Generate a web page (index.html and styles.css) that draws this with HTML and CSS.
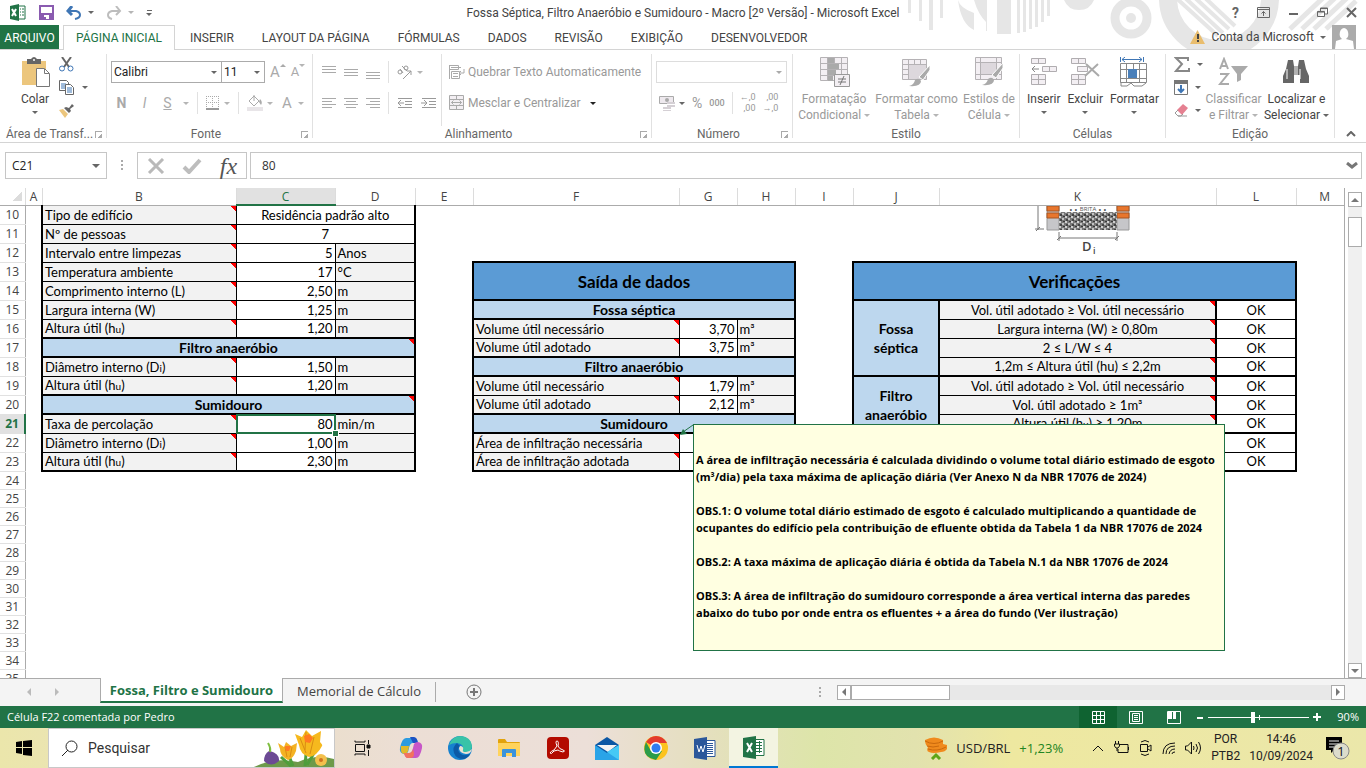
FILE: index.html
```html
<!DOCTYPE html>
<html lang="pt-BR">
<head>
<meta charset="utf-8">
<title>Fossa Séptica, Filtro Anaeróbio e Sumidouro - Microsoft Excel</title>
<link rel="stylesheet" href="styles.css">
</head>
<body>
<header class="top">
  <svg class="pattern" width="462" height="49" viewBox="904 0 462 49" aria-hidden="true">
    <g fill="#e6e6e6">
      <path d="M908 0h3v13h-3zM919 0h3v21h-3zM929 0h4v30h-4zM940 0h3v18h-3zM958 0q2 8 16 13v17q-13-6-16-30zM974 0h13v31h-1V22q-8-8-12-22zM997 0h14v34h-14zM1017 0h3v33h-3zM1023 0h3v32h-3zM1029 0h3v29h-3zM1035 0h3v27h-3zM1041 0h3v22h-3zM1047 0h3v16h-3z"/>
      <path d="M1064 0h30q-4 10-15 10t-15-10z"/>
      <circle cx="1131" cy="18" r="5"/>
    </g>
    <circle cx="1131" cy="18" r="16" fill="none" stroke="#e6e6e6" stroke-width="9"/>
    <circle cx="1219" cy="-2" r="51" fill="none" stroke="#e6e6e6" stroke-width="18"/>
    <path d="M1174-4l44 40M1183-4l40 37M1193-4l36 33M1203-4l32 30" stroke="#e6e6e6" stroke-width="4"/>
    <path d="M1290 29l34-32M1302 29l34-32M1314 29l34-32M1326 29l30-28" stroke="#e6e6e6" stroke-width="5"/>
  </svg>
  <div class="titlebar">
    <div class="quick">
      <svg width="18" height="18" viewBox="0 0 18 18"><path d="M9 2h7v13H9z" fill="#fff" stroke="#217346"/><path d="M11 5h1M13 5h2M11 8h1M13 8h2M11 11h1M13 11h2" stroke="#217346"/><path d="M1 2l9-2v17l-9-2z" fill="#217346"/><path d="M3 5l4 7M7 5l-4 7" stroke="#fff" stroke-width="2"/></svg>
      <button aria-label="Salvar"><svg width="15" height="15" viewBox="0 0 15 15"><path d="M1 1h13v13H1z" fill="#fff" stroke="#8a5bb0" stroke-width="2"/><path d="M1 8h13v6H1z" fill="#8a5bb0"/><path d="M5 10h5v4H7v-2H5z" fill="#fff"/></svg></button>
      <button class="undo" aria-label="Desfazer"><svg width="16" height="14" viewBox="0 0 16 14"><path d="M2 5h8q4 1 4 4t-5 4" fill="none" stroke="#3f76b5" stroke-width="2"/><path d="M6 0L2 5l4 4" fill="none" stroke="#3f76b5" stroke-width="3"/></svg><i class="caret"></i></button>
      <button class="undo" aria-label="Refazer"><svg width="16" height="14" viewBox="0 0 16 14"><path d="M14 5H6Q2 6 2 9t4 4" fill="none" stroke="#bdbdbd" stroke-width="2"/><path d="M10 0l4 5-4 4" fill="none" stroke="#bdbdbd" stroke-width="2"/></svg><i class="caret pale"></i></button>
      <button class="more" aria-label="Personalizar"><b></b><i class="caret"></i></button>
    </div>
    <h1>Fossa Séptica, Filtro Anaeróbio e Sumidouro - Macro [2º Versão] - Microsoft Excel</h1>
    <div class="winbtns">
      <button class="help" aria-label="Ajuda">?</button>
      <button aria-label="Opções da faixa"><svg width="13" height="11" viewBox="0 0 13 11" fill="none" stroke="#666"><path d="M.5.5h12v10H.5zM.5 2.5h12M6.500 9V4.500M4.500 6.500l2-2 2 2"/></svg></button>
      <button aria-label="Minimizar"><svg width="11" height="11" viewBox="0 0 11 11"><path d="M1 6h9v2H1z" fill="#666"/></svg></button>
      <button aria-label="Restaurar"><svg width="11" height="11" viewBox="0 0 11 11" fill="none" stroke="#666"><path d="M.5 4.500h7v5h-7zM.5 5h7M3.500 4V1h7v6H8M3.500 1.500h7"/></svg></button>
      <button aria-label="Fechar"><svg width="11" height="11" viewBox="0 0 11 11"><path d="M1 1l9 9M10 1l-9 9" stroke="#666" stroke-width="2"/></svg></button>
    </div>
  </div>
  <nav class="tabs">
    <a href="#" class="file">ARQUIVO</a>
    <a href="#" class="on">PÁGINA INICIAL</a>
    <a href="#">INSERIR</a>
    <a href="#">LAYOUT DA PÁGINA</a>
    <a href="#">FÓRMULAS</a>
    <a href="#">DADOS</a>
    <a href="#">REVISÃO</a>
    <a href="#">EXIBIÇÃO</a>
    <a href="#">DESENVOLVEDOR</a>
    <button class="account"><svg width="15" height="14" viewBox="0 0 15 14"><path d="M7.500 0l7.500 14H0z" fill="#e9bd6d"/><path d="M7 4h2v5H7zM7 10h2v2H7z" fill="#444"/></svg>Conta da Microsoft<i class="caret"></i><svg width="24" height="24" viewBox="0 0 24 24"><path d="M0 0h24v24H0z" fill="#ababab"/><path d="M12 3a5 6 0 0 1 2 11l7 2 1 8H3l1-8 6-2a5 6 0 0 1 2-11z" fill="#fff"/></svg></button>
  </nav>
</header>

<section class="ribbon">
  <div class="group">
    <div class="body clip">
      <button class="big"><svg width="30" height="30" viewBox="0 0 30 30"><path d="M2 4h24v24H2z" fill="#ecc67d"/><path d="M7 2h4q3-4 6 0h4v5H7z" fill="#666"/><circle cx="14" cy="3" r="1" fill="#fff"/><path d="M16.500 11.500h8l5 5v13h-13z" fill="#fff" stroke="#777"/><path d="M24.500 12v4.500H29" fill="none" stroke="#777"/></svg><span>Colar</span><i class="caret"></i></button>
      <div class="stack">
        <button aria-label="Recortar"><svg width="15" height="15" viewBox="0 0 15 15" fill="none"><path d="M3 0l7 10M12 0L5 10" stroke="#666" stroke-width="2"/><circle cx="3" cy="11.500" r="2.500" stroke="#3f76b5"/><circle cx="11.500" cy="11.500" r="2.500" stroke="#3f76b5"/></svg></button>
        <button aria-label="Copiar"><svg width="16" height="15" viewBox="0 0 16 15"><path d="M.5.5h7l2 2v8h-9z" fill="#fff" stroke="#666"/><path d="M2 4h5M2 6h5M2 8h5" stroke="#3f76b5"/><path d="M6.500 4.500h5l3 3v7h-8z" fill="#fff" stroke="#666"/><path d="M8 8h5M8 10h5M8 12h5" stroke="#3f76b5"/></svg><i class="caret"></i></button>
        <button aria-label="Pincel de formatação"><svg width="16" height="14" viewBox="0 0 16 14"><path d="M0 6l4-1 5 5-3 4z" fill="#ecc67d"/><path d="M5 4l5 5 2-2-1-2 4-3-2-2-3 4-3-1z" fill="#666"/></svg></button>
      </div>
    </div>
    <footer><span>Área de Transf...</span><i class="launch"></i></footer>
  </div>

  <div class="group off">
    <div class="body rows pad4">
      <div class="row">
        <label class="combo font"><select aria-label="Fonte"><option>Calibri</option></select></label><label class="combo size"><select aria-label="Tamanho"><option>11</option></select></label>
        <button class="grow" aria-label="Aumentar fonte">A<i class="up"></i></button>
        <button class="shrink" aria-label="Diminuir fonte">A<i class="caret pale"></i></button>
      </div>
      <div class="row fmt">
        <button class="ltr"><b>N</b></button><button class="ltr"><em>I</em></button><button class="ltr"><u>S</u></button><button aria-label="Sublinhado"><i class="caret pale"></i></button>
        <i class="bar"></i>
        <button aria-label="Bordas"><svg width="14" height="14" viewBox="0 0 14 14"><path d="M.5 0v13M6.500 0v13M12.500 0v13M0 .5h13M0 6.500h13" stroke="#aaa" stroke-dasharray="1 1"/><path d="M0 13h13" stroke="#999" stroke-width="2"/></svg><i class="caret pale"></i></button>
        <i class="bar"></i>
        <button aria-label="Cor de preenchimento"><svg width="16" height="16" viewBox="0 0 16 16"><path d="M2 6l5-5 5 5-5 5zM7 6V0" fill="none" stroke="#aaa"/><path d="M13 4q3 3 1 6l-2-3z" fill="#aaa"/><path d="M0 12h16v4H0z" fill="#e8e5e8"/></svg><i class="caret pale"></i></button>
        <button class="ltr fontcolor">A<i class="caret pale"></i></button>
      </div>
    </div>
    <footer><span>Fonte</span><i class="launch"></i></footer>
  </div>

  <div class="group off align">
    <div class="body rows">
      <div class="row">
        <button aria-label="Alinhar acima"><i class="ln t"></i></button><button aria-label="Alinhar no meio"><i class="ln"></i></button><button aria-label="Alinhar abaixo"><i class="ln d"></i></button>
        <i class="bar"></i>
        <button aria-label="Orientação"><svg width="16" height="16" viewBox="0 0 16 16"><g fill="none" stroke="#999"><circle cx="3" cy="8" r="2"/><path d="M3 5l3 4M5 2l5 5"/><circle cx="9" cy="4" r="2"/><path d="M6 15l8-8M10 7h4v4"/></g></svg><i class="caret pale"></i></button>
      </div>
      <div class="row">
        <button aria-label="Esquerda"><i class="ln l4"></i></button><button aria-label="Centro"><i class="ln l4 c"></i></button><button aria-label="Direita"><i class="ln l4 r"></i></button>
        <i class="bar"></i>
        <button aria-label="Diminuir recuo"><svg width="16" height="12" viewBox="0 0 16 12"><path d="M1 1.500h14M8 4.500h7M8 7.500h7M1 10.500h14M1 6h6M4 3L1 6l3 3" fill="none" stroke="#999"/></svg></button>
        <button aria-label="Aumentar recuo"><svg width="16" height="12" viewBox="0 0 16 12"><path d="M1 1.500h14M8 4.500h7M8 7.500h7M1 10.500h14M0 6h6M3 3l3 3-3 3" fill="none" stroke="#999"/></svg></button>
      </div>
    </div>
    <div class="body rows wrapcol">
      <button class="row txt"><svg width="16" height="16" viewBox="0 0 16 16" fill="none" stroke="#aaa"><path d="M.5 1v14M.5 1.500h9v4h-9zM2 3.500h10M2.500 7.500h8v7h-8zM4 9.500h5M4 12.500h5M15 5v4h-4M12 7l-2 2 2 2"/></svg><span>Quebrar Texto Automaticamente</span></button>
      <button class="row txt"><svg width="16" height="16" viewBox="0 0 16 16" fill="#f3eff3" stroke="#aaa"><path d="M.5.5h14v14H.5zM.5 4.500h14M.5 10.500h14M7.500.5v4M7.500 10.500v4M2.500 7.500h10M4.500 5.500l-2 2 2 2M10.500 5.500l2 2-2 2"/></svg><span>Mesclar e Centralizar</span><i class="caret dark"></i></button>
    </div>
    <footer><span>Alinhamento</span><i class="launch"></i></footer>
  </div>

  <div class="group off">
    <div class="body rows pad4">
      <label class="combo num"><select aria-label="Formato de número"><option></option></select></label>
      <div class="row nums">
        <button aria-label="Moeda"><svg width="16" height="16" viewBox="0 0 16 16"><path d="M.5 1.500h14v7H.5z" fill="#eee9ee" stroke="#aaa"/><circle cx="8" cy="5" r="2" fill="#aaa"/><path d="M8 7h8v2H8zM8 10h8v2H8zM4 12h8v2H4zM4 15h8v1H4z" fill="#d5d0d5"/></svg><i class="caret"></i></button>
        <button class="pct">%</button><button class="mil">000</button><i class="bar"></i>
        <button class="dec"><span>←,0</span><span>,00</span></button><button class="dec"><span>,00</span><span>→,0</span></button>
      </div>
    </div>
    <footer><span>Número</span><i class="launch"></i></footer>
  </div>

  <div class="group off">
    <div class="body bigs">
      <button class="big"><svg width="31" height="30" viewBox="0 0 31 30"><path d="M1.500.5h27v23h-27zM8.500.5v23M15.500.5v23M22.500.5v23M1.500 6.500h27M1.500 12.500h27M1.500 18.500h27" fill="#f3eff3" stroke="#b5b2b5"/><path d="M9 1h6v5H9zM9 7h11v5H9zM9 13h8v5H9zM9 19h5v5H9z" fill="#aaa"/><path d="M15.500 17.500h15v12h-15z" fill="#f3eff3" stroke="#999"/><path d="M19 22h8M19 25h8M25 19l-4 9" stroke="#777"/></svg><span>Formatação<br>Condicional <i class="caret pale"></i></span></button>
      <button class="big"><svg width="31" height="30" viewBox="0 0 31 30"><path d="M1.500 2.500h24v20h-24zM7.500 2.500v20M13.500 2.500v20M19.500 2.500v20M1.500 7.500h24M1.500 12.500h24M1.500 17.500h24" fill="#f3eff3" stroke="#b5b2b5"/><path d="M8 8h17v14H8z" fill="#ddd8dd"/><path d="M29 8L18 20l4 3 7-10z" fill="#aaa" stroke="#fff"/><path d="M8 29q5-1 6-6 4-3 6 1 0 6-12 5z" fill="#aaa"/></svg><span>Formatar como<br>Tabela <i class="caret pale"></i></span></button>
      <button class="big"><svg width="31" height="30" viewBox="0 0 31 30"><path d="M2.500.5h26v22h-26zM7.500.5v22M23.500.5v22M2.500 5.500h26M2.500 17.500h26" fill="#f3eff3" stroke="#b5b2b5"/><path d="M8 6h15v11H8z" fill="#ddd8dd"/><path d="M30 6L19 18l4 3 7-10z" fill="#aaa" stroke="#fff"/><path d="M9 28q5-1 6-6 4-3 6 1 0 6-12 5z" fill="#aaa"/></svg><span>Estilos de<br>Célula <i class="caret pale"></i></span></button>
    </div>
    <footer><span>Estilo</span></footer>
  </div>

  <div class="group">
    <div class="body bigs">
      <button class="big"><svg width="28" height="30" viewBox="0 0 28 30"><path d="M1.500 1.500h14v5h-14zM8.500 1.500v5M12.500 9.500h14v5h-14zM19.500 9.500v5M1.500 17.500h14v10h-14zM1.500 22.500h14M8.500 17.500v10" fill="#f3eff3" stroke="#b0adb0"/><path d="M9 12H3M5 9l-3 3 3 3" fill="none" stroke="#888"/></svg><span>Inserir</span><i class="caret"></i></button>
      <button class="big"><svg width="30" height="30" viewBox="0 0 30 30"><path d="M1.500 1.500h14v5h-14zM8.500 1.500v5M7.500 9.500h10v5h-10zM1.500 17.500h14v10h-14zM1.500 22.500h14M8.500 17.500v10" fill="#f3eff3" stroke="#b0adb0"/><path d="M16 7l13 12M28 7L15 19" stroke="#aaa" stroke-width="2"/></svg><span>Excluir</span><i class="caret"></i></button>
      <button class="big"><svg width="30" height="30" viewBox="0 0 30 30"><path d="M1.500 6.500h26v19h-26zM7.500 6.500v19M20.500 6.500v19M1.500 12.500h26M1.500 21.500h26M14.500 6.500v6" fill="#fff" stroke="#888"/><path d="M9 12h9v9H9z" fill="#4a80ba"/><path d="M2 25v4h6l4-3 3 3h8l4-3" fill="none" stroke="#888"/><path d="M1.500 0v5M24.500 0v5M3 2.500h20M6 0L3 2.500 6 5M20 0l3 2.500L20 5" fill="none" stroke="#3f76b5"/></svg><span>Formatar</span><i class="caret"></i></button>
    </div>
    <footer><span>Células</span></footer>
  </div>

  <div class="group">
    <div class="body edit">
      <div class="stack">
        <button aria-label="Soma"><svg width="16" height="15" viewBox="0 0 16 15"><path d="M14 4V1H2l6 6-6 7h13v-3" fill="none" stroke="#888" stroke-width="2"/></svg><i class="caret"></i></button>
        <button aria-label="Preencher"><svg width="14" height="15" viewBox="0 0 14 15"><path d="M.5.5h13v14H.5z" fill="#fff" stroke="#777"/><path d="M0 0h14v4H0z" fill="#777"/><path d="M7 5v7M4 9l3 3 3-3" fill="none" stroke="#3f76b5" stroke-width="2"/></svg><i class="caret"></i></button>
        <button aria-label="Limpar"><svg width="14" height="13" viewBox="0 0 14 13"><path d="M3 6l6-6 5 4-6 7z" fill="#e58091"/><path d="M4 6L1 9l3 3h3l2-2M4 12h9" fill="none" stroke="#999"/></svg><i class="caret"></i></button>
      </div>
      <button class="big dis"><svg width="30" height="30" viewBox="0 0 30 30"><g fill="none" stroke="#aaa" stroke-width="2"><path d="M2 12L6 2l4 10M3 9h6M2 17h8L2 27h9"/></g><path d="M13 9h17l-7 8v6l-4 2v-8z" fill="#aaa"/></svg><span>Classificar<br>e Filtrar <i class="caret pale"></i></span></button>
      <button class="big"><svg width="26" height="30" viewBox="0 0 26 30"><path d="M5 3h5l1 6h4l1-6h5l2 9 3 7v7h-9v-8h-6v8H0v-7l3-7z" fill="#666"/><path d="M4 12v10M12 9v9M14 9v9M17 12v10" stroke="#fff"/></svg><span>Localizar e<br>Selecionar <i class="caret"></i></span></button>
    </div>
    <footer><span>Edição</span></footer>
  </div>
  <button class="collapse" aria-label="Recolher"><svg width="10" height="6" viewBox="0 0 10 6"><path d="M1 5l4-4 4 4" fill="none" stroke="#666" stroke-width="2"/></svg></button>
</section>

<section class="fbar">
  <label class="combo name"><input aria-label="Caixa de nome" value="C21"></label>
  <i class="dots"></i>
  <div class="fx">
    <button aria-label="Cancelar"><svg width="18" height="16" viewBox="0 0 18 16"><path d="M2 1l14 14M16 1L2 15" stroke="#b9b9b9" stroke-width="3"/></svg></button>
    <button aria-label="Inserir"><svg width="20" height="16" viewBox="0 0 20 16"><path d="M2 9l5 5L18 2" fill="none" stroke="#bdbdbd" stroke-width="4"/></svg></button>
    <button class="fxb">fx</button>
  </div>
  <div class="formula"><input aria-label="Fórmula" value="80"><svg width="12" height="8" viewBox="0 0 12 8"><path d="M1 1l5 4 5-4" fill="none" stroke="#777" stroke-width="3"/></svg></div>
</section>

<main class="sheet">
  <div class="view">
    <table>
      <colgroup><col class="w25"><col class="w17"><col class="w194"><col class="w99"><col class="w80"><col class="w58"><col class="w206"><col class="w58"><col class="w58"><col class="w58"><col class="w86"><col class="w277"><col class="w80"><col></colgroup>
      <thead><tr><th class="corner"></th><th>A</th><th>B</th><th class="sel">C</th><th>D</th><th>E</th><th>F</th><th>G</th><th>H</th><th>I</th><th>J</th><th>K</th><th>L</th><th>M</th></tr></thead>
      <tbody>
        <tr><th>10</th><td></td><td class="lab n ml">Tipo de edifício</td><td colspan="2" class="val mid mr">Residência padrão alto</td><td></td><td></td><td></td><td></td><td></td><td></td><td></td><td></td><td></td></tr>
        <tr><th>11</th><td></td><td class="lab n ml">Nº de pessoas</td><td colspan="2" class="val mid mr">7</td><td></td><td></td><td></td><td></td><td></td><td></td><td></td><td></td><td></td></tr>
        <tr><th>12</th><td></td><td class="lab n ml">Intervalo entre limpezas</td><td class="val">5</td><td class="unit mr">Anos</td><td></td><td></td><td></td><td></td><td></td><td></td><td></td><td></td><td></td></tr>
        <tr><th>13</th><td></td><td class="lab n ml">Temperatura ambiente</td><td class="val">17</td><td class="unit mr">°C</td><td></td><td colspan="3" rowspan="2" class="head ml mr">Saída de dados</td><td></td><td colspan="3" rowspan="2" class="head ml mr">Verificações</td><td></td></tr>
        <tr><th>14</th><td></td><td class="lab n ml">Comprimento interno (L)</td><td class="val">2,50</td><td class="unit mr">m</td><td></td><td></td><td></td></tr>
        <tr><th>15</th><td></td><td class="lab n ml">Largura interna (W)</td><td class="val">1,25</td><td class="unit mr">m</td><td></td><td colspan="3" class="sub ml mr">Fossa séptica</td><td></td><td rowspan="4" class="sub ml mr">Fossa<br>séptica</td><td class="lab mid n">Vol. útil adotado ≥ Vol. útil necessário</td><td class="val mid ml mr">OK</td><td></td></tr>
        <tr><th>16</th><td></td><td class="lab n ml">Altura útil (h<small>u</small>)</td><td class="val">1,20</td><td class="unit mr">m</td><td></td><td class="lab n ml">Volume útil necessário</td><td class="val">3,70</td><td class="unit mr">m³</td><td></td><td class="lab mid n">Largura interna (W) ≥ 0,80m</td><td class="val mid ml mr">OK</td><td></td></tr>
        <tr><th>17</th><td></td><td colspan="3" class="sub n ml mr">Filtro anaeróbio</td><td></td><td class="lab n ml">Volume útil adotado</td><td class="val">3,75</td><td class="unit mr">m³</td><td></td><td class="lab mid n">2 ≤ L/W ≤ 4</td><td class="val mid ml mr">OK</td><td></td></tr>
        <tr><th>18</th><td></td><td class="lab n ml">Diâmetro interno (D<small>i</small>)</td><td class="val">1,50</td><td class="unit mr">m</td><td></td><td colspan="3" class="sub ml mr">Filtro anaeróbio</td><td></td><td class="lab mid n mb">1,2m ≤ Altura útil (hu) ≤ 2,2m</td><td class="val mid ml mr mb">OK</td><td></td></tr>
        <tr><th>19</th><td></td><td class="lab n ml">Altura útil (h<small>u</small>)</td><td class="val">1,20</td><td class="unit mr">m</td><td></td><td class="lab n ml">Volume útil necessário</td><td class="val">1,79</td><td class="unit mr">m³</td><td></td><td rowspan="3" class="sub ml mr">Filtro<br>anaeróbio</td><td class="lab mid n">Vol. útil adotado ≥ Vol. útil necessário</td><td class="val mid ml mr">OK</td><td></td></tr>
        <tr><th>20</th><td></td><td colspan="3" class="sub n ml mr">Sumidouro</td><td></td><td class="lab n ml">Volume útil adotado</td><td class="val">2,12</td><td class="unit mr">m³</td><td></td><td class="lab mid n">Vol. útil adotado ≥ 1m³</td><td class="val mid ml mr">OK</td><td></td></tr>
        <tr><th class="sel">21</th><td></td><td class="lab n ml">Taxa de percolação</td><td class="val active">80</td><td class="unit mr">min/m</td><td></td><td colspan="3" class="sub ml mr">Sumidouro</td><td></td><td class="lab mid n mb">Altura útil (h<small>u</small>) ≥ 1,20m</td><td class="val mid ml mr mb">OK</td><td></td></tr>
        <tr><th>22</th><td></td><td class="lab n ml">Diâmetro interno (D<small>i</small>)</td><td class="val">1,00</td><td class="unit mr">m</td><td></td><td class="lab n ml">Área de infiltração necessária</td><td class="val"></td><td class="unit mr"></td><td></td><td rowspan="2" class="sub ml mr"></td><td class="lab mid n"></td><td class="val mid ml mr">OK</td><td></td></tr>
        <tr><th>23</th><td></td><td class="lab n ml mb">Altura útil (h<small>u</small>)</td><td class="val mb">2,30</td><td class="unit mr mb">m</td><td></td><td class="lab n ml mb">Área de infiltração adotada</td><td class="val mb"></td><td class="unit mr mb"></td><td></td><td class="lab mid n mb"></td><td class="val mid ml mr mb">OK</td><td></td></tr>
        <tr class="s"><th>24</th><td colspan="13"></td></tr>
        <tr class="s"><th>25</th><td colspan="13"></td></tr>
        <tr class="s"><th>26</th><td colspan="13"></td></tr>
        <tr class="s"><th>27</th><td colspan="13"></td></tr>
        <tr class="s"><th>28</th><td colspan="13"></td></tr>
        <tr class="s"><th>29</th><td colspan="13"></td></tr>
        <tr class="s"><th>30</th><td colspan="13"></td></tr>
        <tr class="s"><th>31</th><td colspan="13"></td></tr>
        <tr class="s"><th>32</th><td colspan="13"></td></tr>
        <tr class="s"><th>33</th><td colspan="13"></td></tr>
        <tr class="s"><th>34</th><td colspan="13"></td></tr>
        <tr class="s"><th>35</th><td colspan="13"></td></tr>
      </tbody>
    </table>
    <svg class="figure" width="100" height="50" viewBox="0 0 100 50">
      <defs><pattern id="grav" width="6" height="5" patternUnits="userSpaceOnUse"><path d="M0 0h6v5H0z" fill="#777"/><circle cx="1" cy="1" r="1" fill="#eee"/><circle cx="4" cy="3" r="1" fill="#ddd"/><circle cx="5" cy="0" r="1" fill="#222"/><circle cx="2" cy="4" r="1" fill="#333"/></pattern></defs>
      <path d="M12 0h12v24H12zM82 0h12v24H82z" fill="#c6c6c9" stroke="#999"/>
      <path d="M12 0h12v5H12zM12 7h12v5H12zM82 0h12v5H82zM82 7h12v5H82z" fill="#e8762d" stroke="#a65522"/>
      <path d="M24 6h58v18H24z" fill="url(#grav)"/>
      <text x="53" y="5" font-size="6" font-family="Open Sans" text-anchor="middle" fill="#555">∘ ∘ BRITA ∘ ∘</text>
      <path d="M3 0v24M0 23h9M1 25l4-4M24 26v9M82 26v9M24 32h58M22 34l4-4M80 34l4-4" stroke="#777" fill="none"/>
      <text x="47" y="45" font-size="13" font-weight="600" font-family="Open Sans" fill="#444">D</text><text x="58" y="48" font-size="9" font-weight="600" font-family="Open Sans" fill="#444">i</text>
    </svg>
    <svg class="arrow" width="15" height="12" viewBox="0 0 15 12"><path d="M14 1L4 8" stroke="#217346"/><path d="M1 11l3-6 4 5z" fill="#217346"/></svg>
    <aside class="note">
      <p>A área de infiltração necessária é calculada dividindo o volume total diário estimado de esgoto<br>(m³/dia) pela taxa máxima de aplicação diária (Ver Anexo N da NBR 17076 de 2024)</p>
      <p>OBS.1: O volume total diário estimado de esgoto é calculado multiplicando a quantidade de<br>ocupantes do edifício pela contribuição de efluente obtida da Tabela 1 da NBR 17076 de 2024</p>
      <p>OBS.2: A taxa máxima de aplicação diária é obtida da Tabela N.1 da NBR 17076 de 2024</p>
      <p>OBS.3: A área de infiltração do sumidouro corresponde a área vertical interna das paredes<br>abaixo do tubo por onde entra os efluentes + a área do fundo (Ver ilustração)</p>
    </aside>
  </div>
  <div class="vscroll"><button aria-label="Subir"><i class="tri u"></i></button><i class="thumb"></i><button class="end" aria-label="Descer"><i class="tri dn"></i></button></div>
</main>

<nav class="sheets">
  <button class="nav" aria-label="Anterior"><i class="tri lf pale"></i></button><button class="nav" aria-label="Próxima"><i class="tri rt pale"></i></button>
  <a href="#" class="tab on">Fossa, Filtro e Sumidouro</a>
  <a href="#" class="tab">Memorial de Cálculo</a>
  <button class="add" aria-label="Nova planilha"><svg width="16" height="16" viewBox="0 0 16 16" fill="none" stroke="#777"><circle cx="8" cy="8" r="7"/><path d="M8 4v8M4 8h8" stroke-width="2"/></svg></button>
  <i class="dots"></i>
  <div class="hscroll"><button aria-label="Esquerda"><i class="tri lf"></i></button><i class="thumb"></i><button class="end" aria-label="Direita"><i class="tri rt"></i></button></div>
</nav>

<footer class="status">
  <span>Célula F22 comentada por Pedro</span>
  <button class="on" aria-label="Normal"><svg width="13" height="13" viewBox="0 0 13 13" fill="none" stroke="#fff"><path d="M.5.5h12v12H.5zM4.500 0v13M8.500 0v13M0 4.500h13M0 8.500h13"/></svg></button>
  <button aria-label="Layout"><svg width="14" height="13" viewBox="0 0 14 13" fill="none" stroke="#fff"><path d="M.5.5h13v12H.5zM3.500 2.500h7v8h-7zM5 4.500h4M5 6.500h4M5 8.500h4"/></svg></button>
  <button aria-label="Quebra de página"><svg width="14" height="13" viewBox="0 0 14 13"><path d="M.5.5h13v12H.5z" fill="none" stroke="#fff"/><path d="M1 1h4v7H1zM6 1h3v7H6z" fill="#fff"/></svg></button>
  <button class="step" aria-label="Diminuir zoom"><svg width="7" height="7"><path d="M0 3h6v2H0z" fill="#fff"/></svg></button>
  <input type="range" min="10" max="210" value="99" aria-label="Zoom">
  <button class="step" aria-label="Aumentar zoom"><svg width="8" height="8"><path d="M0 3h8v2H0zM3 0h2v8H3z" fill="#fff"/></svg></button>
  <span class="zoom">90%</span>
</footer>

<footer class="taskbar">
  <button class="start" aria-label="Iniciar"><svg width="16" height="16" viewBox="0 0 16 16"><path d="M0 2l6-1v6H0zM7 1l9-1v7H7zM0 8h6v6l-6-1zM7 8h9v8l-9-1z"/></svg></button>
  <label class="search"><svg width="17" height="17" viewBox="0 0 17 17" fill="none" stroke="#222"><circle cx="10.500" cy="6.500" r="5.500"/><path d="M7 10l-6 6"/></svg><input placeholder="Pesquisar" aria-label="Pesquisar">
    <svg width="80" height="38" viewBox="0 0 80 38"><path d="M0 38q20-10 44-5 18-8 36-3v8z" fill="#6d9a4a"/><path d="M15 16q2 4 1 6 10 3 9 10-8 7-15 0 0-7 5-10z" fill="#6c4a94"/><path d="M14 14q3 5 2 9" fill="none" stroke="#7fbf3f" stroke-width="2"/><path d="M35 27l4 10M52 25l-1 12M60 24l-7 12M27 28l10 9" stroke="#4f9e3c" stroke-width="3"/><path d="M24 14l6 4 2-5 5 4 6-3-1 8q-3 8-8 9-8-4-8-11z" fill="#f4b223"/><path d="M41 5l7 3 4-7 6 6 9-5-1 11q3 3 2 4-5 10-13 11-9-3-10-12z" fill="#f6b91e"/><path d="M46 9l6 15M52 3l-1 18M60 8l-4 17M31 18l2 10M38 18l-2 10" stroke="#d98c12" fill="none"/><path d="M50 7l5-2 4 4-3 5-5-1zM31 17h6l-2 5h-3z" fill="#ff7a22"/><circle cx="67" cy="31" r="6" fill="#f3c04c"/><circle cx="67" cy="31" r="2" fill="#d0721e"/></svg></label>
  <div class="apps">
    <button aria-label="Visão de tarefas"><svg width="18" height="16" viewBox="0 0 18 16" fill="none" stroke="#111"><path d="M2.500 4.500h9v7h-9zM2 .5v1.500h10V.5M2 15.500V14h10v1.500M15.500 0v4M15.500 10v6"/><path d="M14 5h3v3h-3z" fill="#111"/></svg></button>
    <button aria-label="Copilot"><svg width="24" height="22" viewBox="0 0 24 22"><path d="M7 1h8q3 0 4 5h-5q-3 0-4 5l-1 4q-1 2-4 2-5-1-4-6Q3 1 7 1z" fill="#2c9be0"/><path d="M2 9h8l-1 5q-1 3-4 3-4-1-3-8z" fill="#e0b92a"/><path d="M11 0h4q3 0 4 6h-5z" fill="#1c53c4"/><path d="M17 21H9q-3 0-4-5h5q3 0 4-5l1-4q1-2 4-2 5 1 4 6-2 10-6 10z" fill="#c757c8"/><path d="M11 21H9q-3 0-4-5h5q3 0 4-4 3 9-3 9z" fill="#f2735d"/></svg></button>
    <button aria-label="Edge"><svg width="24" height="24" viewBox="0 0 24 24"><circle cx="12" cy="12" r="12" fill="#1681cf"/><path d="M1 9Q4 0 13 0q10 1 11 10 0 6-7 6-4 0-2-3 1-5-6-6-5 0-8 2z" fill="#39c3a8"/><path d="M9 7q-5 4-3 10 2 6 10 6 5-2 6-5-8 3-11-2-2-3 1-6z" fill="#0c5aa6"/><path d="M12 10q4 0 3 4-1 2 3 2 3 0 6-3-1 5-6 5-7-1-7-6z" fill="#e9e1d2"/></svg></button>
    <button aria-label="Explorador"><svg width="22" height="18" viewBox="0 0 22 18"><path d="M0 1q0-1 1-1h6l2 3h12q1 0 1 1v13H0z" fill="#e2a30c"/><path d="M0 4h22v13H0z" fill="#ffd35c"/><path d="M4 18v-7q0-1 1-1h12q1 0 1 1v7h-4v-4H8v4z" fill="#3b93dc"/></svg></button>
    <button aria-label="Acrobat"><svg width="22" height="22" viewBox="0 0 22 22"><rect width="22" height="22" rx="4" fill="#b30b00"/><path d="M10 4q2 0 1 5 1 3 5 4 3 1 0 2-4-1-5-2l-4 1q-3 4-4 2 1-2 4-3l3-4q-2-5 0-5z" fill="none" stroke="#fff"/></svg></button>
    <button aria-label="Email"><svg width="24" height="23" viewBox="0 0 24 23"><path d="M0 8l12-8 12 8v15H0z" fill="#0b57a4"/><path d="M2 8h20l-9 7z" fill="#f3f3f3"/><path d="M0 8l12 8 12-8v15H0z" fill="#2aa4e8"/><path d="M24 8v15L12 15z" fill="#45c9f5"/></svg></button>
    <button aria-label="Chrome"><svg width="24" height="24" viewBox="0 0 24 24"><circle cx="12" cy="12" r="12" fill="#fcc31e"/><path d="M12 12L2 6Q6 0 12 0q7 0 11 7H12z" fill="#e33b2e"/><path d="M2 6q-6 15 10 18l6-9H7z" fill="#2b9c4a"/><circle cx="12" cy="12" r="6" fill="#fff"/><circle cx="12" cy="12" r="4.500" fill="#2f7cf0"/></svg></button>
    <button aria-label="Word"><svg width="22" height="23" viewBox="0 0 22 23"><path d="M11 3.500h10v16H11z" fill="#fff" stroke="#2b579a"/><path d="M13 6.500h6M13 8.500h6M13 10.500h6M13 12.500h6M13 14.500h6M13 16.500h6" stroke="#2b579a"/><path d="M0 2l13-2v23L0 21z" fill="#2b579a"/><path d="M3 8l2 7 2-6 2 6 2-7" fill="none" stroke="#fff"/></svg></button>
    <button class="on" aria-label="Excel"><svg width="22" height="23" viewBox="0 0 22 23"><path d="M11 3.500h10v16H11z" fill="#fff" stroke="#217346"/><path d="M13 6.500h6M13 9.500h6M13 12.500h6M13 15.500h6M16.500 5v12" stroke="#217346"/><path d="M0 2l13-2v23L0 21z" fill="#217346"/><path d="M4 7l5 9M9 7l-5 9" stroke="#fff" stroke-width="2"/></svg></button>
  </div>
  <div class="tray">
    <button class="rate"><svg width="22" height="23" viewBox="0 0 22 23"><path d="M0 3q9-5 18 0v4l4 1v4q-2 3-6 3-8 2-12 0-3-1-1-5-3-2-3-7z" fill="#f08a1d"/><path d="M0 4q9 5 18 0M2 9q6 2 12 0M3 12q9 3 18-2" stroke="#c9690d" fill="none"/><path d="M7 22l4-4 4 4" fill="none" stroke="#5ea516" stroke-width="3"/></svg><span>USD/BRL</span><span class="up2">+1,23%</span></button>
    <svg class="chev" width="13" height="8" viewBox="0 0 13 8"><path d="M1 7l5-5 5 5" fill="none" stroke="#111"/></svg>
    <svg width="16" height="14" viewBox="0 0 16 14" fill="none" stroke="#111"><path d="M6 3.500h8v8H4V8M14.500 6v3M1.500 0v3M4.500 0v3M.5 3h5v2L4 7H2L.5 5zM3 7v3"/></svg>
    <svg width="14" height="16" viewBox="0 0 14 16" fill="none" stroke="#111"><path d="M1.500 4.500h7v7h-7zM9 7l3-2v6l-3-2M2 2q4-3 8 0M2 14q4 3 8 0"/></svg>
    <svg width="14" height="14" viewBox="0 0 14 14" fill="none" stroke="#111"><path d="M1 13Q1 2 13 2M4 13q0-8 9-8M7 13q1-5 6-5M10 13q0-2 3-2"/></svg>
    <svg width="17" height="14" viewBox="0 0 17 14" fill="none" stroke="#111"><path d="M.5 5h2l4-4v12l-4-4h-2zM8.500 5q1 2 0 4M11 3q3 4 0 8M13.500 1q4 6 0 12"/></svg>
    <div class="two">POR<br>PTB2</div>
    <time class="two">14:46<br>10/09/2024</time>
    <button class="bell" aria-label="Notificações"><svg width="24" height="24" viewBox="0 0 24 24"><path d="M0 1h16v13H8l-3 3v-3H0z"/><path d="M3 5h10M3 8h10M3 11h7" stroke="#eee"/><circle cx="15" cy="15" r="8" fill="#dcdccc" stroke="#888"/><text x="15" y="20" font-size="13" font-family="Open Sans" text-anchor="middle" fill="#111">1</text></svg></button>
  </div>
</footer>
</body>
</html>
```
FILE: styles.css
```css
* { box-sizing: border-box; }
body { margin: 0; height: 100vh; display: flex; flex-direction: column; overflow: hidden; background: #fff; font: 12px/16px "Open Sans", "Noto Sans", sans-serif; color: #444; }
button, input, select { font: inherit; color: inherit; border: 0; background: none; padding: 0; margin: 0; }
a { color: inherit; text-decoration: none; }
svg { display: block; flex: none; }
h1, p { margin: 0; }
button { display: flex; align-items: center; justify-content: center; gap: 4px; white-space: nowrap; }

.caret { display: inline-block; width: 0; height: 0; border: 3px solid transparent; border-top-color: #666; border-bottom: 0; flex: none; vertical-align: 2px; }
.caret.pale { border-top-color: #b5b5b5; }
.caret.dark { border-top-color: #222; }

.top { position: relative; flex: none; font-family: Roboto, "Open Sans", sans-serif; }
.pattern { position: absolute; top: 0; right: 0; }
.titlebar { position: relative; height: 25px; display: grid; grid-template-columns: 1fr auto 1fr; align-items: center; }
.titlebar h1 { font-size: 12px; font-weight: 400; }
.quick { display: flex; align-items: center; gap: 12px; padding-left: 9px; height: 22px; }
.undo { gap: 6px; }
.more { flex-direction: column; gap: 2px; }
.more b { width: 5px; height: 1px; background: #666; }
.winbtns { display: flex; justify-content: flex-end; gap: 18px; padding-right: 9px; height: 22px; }
.help { font-size: 14px; font-weight: 700; color: #666; }
.tabs { position: relative; display: flex; height: 25px; line-height: 26px; border-bottom: 1px solid #d4d4d4; }
.tabs a { padding: 0 14px; }
.tabs .file { width: 59px; height: 24px; padding: 0; text-align: center; background: #217346; color: #fff; }
.tabs .on { margin: 0 1px 0 4px; padding: 0; width: 112px; text-align: center; background: #fff; color: #217346; border: 1px solid #d4d4d4; border-bottom: 0; height: 25px; line-height: 24px; }
.account { margin-left: auto; padding-right: 10px; gap: 6px; height: 24px; }

.ribbon { flex: none; display: grid; grid-template-columns: 107px 206px 339px 141px 227px 146px 169px 1fr; height: 93px; border-bottom: 1px solid #d4d4d4; font-family: Roboto, "Open Sans", sans-serif; }
.group { display: grid; grid-template: 1fr 16px / 1fr; margin-top: 4px; color: #444; background: linear-gradient(#e1e1e1, #e1e1e1) right top / 1px 84px no-repeat; }
.off { color: #999; }
.group footer { grid-column: 1 / -1; display: flex; align-items: center; color: #666; padding: 0 5px 0 4px; }
.group footer span { flex: 1; text-align: center; }
.launch { width: 7px; height: 7px; border: 1px solid #aaa; border-right: 0; border-bottom: 0; background: linear-gradient(135deg, transparent 60%, #aaa 60%); }
.body { display: flex; align-items: flex-start; }
.big { flex-direction: column; gap: 4px; line-height: 16px; }
.clip { padding: 3px 0 0 20px; gap: 9px; }
.stack { display: flex; flex-direction: column; align-items: flex-start; gap: 8px; }
.stack button { gap: 7px; height: 15px; }
.rows { flex-direction: column; gap: 9px; padding: 7px 0 0 9px; }
.pad4 { padding-left: 4px; }
.row { display: flex; align-items: center; gap: 9px; height: 22px; }
.combo { position: relative; display: block; height: 22px; border: 1px solid #ababab; background: #fff; color: #222; }
.combo select, .combo input { width: 100%; height: 100%; padding: 0 2px; appearance: none; outline: 0; }
.combo::after { content: ""; position: absolute; right: 4px; top: 9px; border: 3px solid transparent; border-top-color: #666; border-bottom: 0; pointer-events: none; }
.font { width: 111px; }
.size { width: 44px; margin-left: -10px; }
.num { width: 131px; border-color: #ddd; }
.num::after { border-top-color: #aaa; }
.grow, .shrink { gap: 0; font-size: 15px; color: #aaa; align-items: flex-start; margin-left: -4px; }
.shrink { font-size: 13px; }
.up { border: 3px solid transparent; border-bottom-color: #aaa; border-top: 0; }
.fmt { gap: 8px; padding-left: 3px; }
.ltr { width: 15px; font-size: 14px; color: #aaa; }
.fontcolor { width: 24px; font-size: 15px; gap: 6px; }
.bar { width: 1px; height: 22px; background: #e1e1e1; }
.align { grid-template-columns: 128px 1fr; }
.align .row { gap: 8px; }
.ln { width: 14px; height: 7px; background: repeating-linear-gradient(#aaa 0 1px, transparent 1px 3px); }
.ln.t { margin-bottom: 6px; }
.ln.d { margin-top: 6px; }
.ln.l4 { height: 10px; background: linear-gradient(#aaa, #aaa) 0 0 / 14px 1px no-repeat, linear-gradient(#aaa, #aaa) 0 3px / 10px 1px no-repeat, linear-gradient(#aaa, #aaa) 0 6px / 14px 1px no-repeat, linear-gradient(#aaa, #aaa) 0 9px / 10px 1px no-repeat; }
.ln.c { background-position: 0 0, 2px 3px, 0 6px, 2px 9px; }
.ln.r { background-position: 0 0, 4px 3px, 0 6px, 4px 9px; }
.wrapcol { border-left: 1px solid #e1e1e1; padding-left: 7px; }
.wrapcol .txt { gap: 3px; }
.txt .caret { margin-left: 6px; }
.nums { gap: 7px; padding-left: 3px; }
.pct { font-size: 14px; }
.mil { font-size: 9px; font-weight: 500; }
.dec { flex-direction: column; gap: 0; font-size: 9px; line-height: 11px; align-items: flex-end; }
.bigs { justify-content: space-evenly; padding-top: 3px; }
.edit { justify-content: space-between; padding: 3px 6px 0 8px; }
.dis { color: #999; }
.collapse { align-items: flex-end; padding-bottom: 5px; }

.fbar { flex: none; display: flex; align-items: center; padding: 0 4px 0 5px; height: 45px; color: #333; }
.name { width: 102px; height: 27px; border-color: #c6c6c6; }
.name input { padding: 0 6px; }
.name::after { border-width: 4px; border-bottom: 0; right: 6px; top: 11px; }
.dots { width: 2px; height: 11px; margin: 0 14px; background: repeating-linear-gradient(#aaa 0 2px, transparent 2px 4px); }
.fx { display: flex; justify-content: space-around; width: 110px; height: 27px; border: 1px solid #c6c6c6; margin-right: 3px; }
.fxb { font: italic 24px/24px "Liberation Serif", serif; color: #555; }
.formula { flex: 1; display: flex; align-items: center; height: 27px; border: 1px solid #c6c6c6; padding: 0 3px 0 11px; }
.formula input { flex: 1; outline: 0; }

.sheet { flex: 1; min-height: 0; display: grid; grid-template-columns: 1fr 21px; background: #fff; }
.view { position: relative; overflow: hidden; border-right: 1px solid #ababab; }
table { border-collapse: collapse; table-layout: fixed; width: calc(100% + 10px); font: 13px/15px Lato, sans-serif; color: #000; }
.w25 { width: 25px; } .w17 { width: 17px; } .w194 { width: 194px; } .w99 { width: 99px; } .w80 { width: 80px; } .w58 { width: 58px; } .w206 { width: 206px; } .w86 { width: 86px; } .w277 { width: 277px; }
tr { height: 19px; }
tr.s { height: 18px; }
th, td { padding: 0; white-space: nowrap; }
th { font: 12px/15px "Open Sans", sans-serif; color: #444; }
thead tr { height: 17px; }
thead th { border-right: 1px solid #dcdcdc; border-bottom: 1px solid #ababab; }
thead th.sel { background: #e1e1e1; border-bottom: 2px solid #217346; color: #217346; }
.corner { background: linear-gradient(135deg, transparent 50%, #dcdcdc 50%) 13px 4px / 9px 9px no-repeat; }
tbody th { border-right: 1px solid #ababab; border-bottom: 1px solid #e1e1e1; }
tbody th.sel { background: #e1e1e1; color: #217346; border-right: 2px solid #217346; font-weight: 700; }
.lab, .unit { background-color: #f2f2f2; border: 1px solid #000; padding: 1px 2px 0; }
.val { border: 1px solid #000; text-align: right; padding: 1px 2px 0; }
.lab.mid, .val.mid { text-align: center; }
.n { background-image: linear-gradient(225deg, #f00 4px, transparent 4px); background-repeat: no-repeat; }
.sub { background-color: #bdd7ee; border: 2px solid #000; font-size: 14px; font-weight: 700; line-height: 15px; text-align: center; }
.sub[rowspan] { line-height: 19px; }
.head { background: #5b9bd5; border: 2px solid #000; font-size: 17px; font-weight: 700; line-height: 19px; text-align: center; }
.ml { border-left: 2px solid #000; }
.mr { border-right: 2px solid #000; }
.mb { border-bottom: 2px solid #000; }
small { font-size: 10px; line-height: 10px; }
.active { position: relative; }
.active::before { content: ""; position: absolute; inset: -1px; border: 2px solid #217346; }
.active::after { content: ""; position: absolute; right: -3px; bottom: -3px; width: 5px; height: 5px; background: #217346; outline: 1px solid #fff; }
.figure { position: absolute; left: 1035px; top: 18px; }
.arrow { position: absolute; left: 679px; top: 236px; }
.note { position: absolute; left: 693px; top: 236px; width: 532px; height: 227px; padding: 26px 2px; background: #ffffe1; border: 1px solid #217346; font: 700 11px/17px "Open Sans", sans-serif; color: #000; white-space: nowrap; }
.note p { margin-bottom: 17px; }
.vscroll { margin: 4px 4px 0 3px; display: flex; flex-direction: column; background: #f0f0f0; }
.vscroll button, .hscroll button { width: 14px; height: 15px; border: 1px solid #ababab; background: #fff; }
.thumb { background: #fff; border: 1px solid #ababab; }
.vscroll .thumb { margin-top: 10px; height: 30px; }
.end { margin: auto 0 0; }
.tri { border: 4px solid transparent; }
.tri.u { border-bottom-color: #777; border-top: 0; }
.tri.dn { border-top-color: #777; border-bottom: 0; }
.tri.lf { border-right-color: #777; border-left: 0; }
.tri.rt { border-left-color: #777; border-right: 0; }
.tri.pale.lf { border-right-color: #bbb; }
.tri.pale.rt { border-left-color: #bbb; }

.sheets { flex: none; display: flex; align-items: center; height: 28px; padding: 0 21px 1px 15px; background: #f4f4f4; border-top: 1px solid #ababab; font-size: 13px; }
.nav { width: 28px; height: 24px; }
.tab { padding: 0 14px; height: 20px; line-height: 18px; border-right: 1px solid #ababab; }
.tab.on { align-self: flex-start; margin-left: 29px; margin-top: -1px; padding: 0; width: 183px; height: 25px; line-height: 25px; text-align: center; background: #fff; color: #217346; font-weight: 700; border-left: 1px solid #ababab; border-bottom: 2px solid #217346; }
.add { margin-left: 30px; }
.sheets .dots { margin-left: auto; margin-right: 16px; }
.hscroll { display: flex; width: 508px; height: 15px; background: #e8e8e8; }
.hscroll .thumb { width: 99px; }
.hscroll .end { margin: 0 0 0 auto; }

.status { flex: none; display: flex; align-items: center; height: 22px; padding: 0 7px; background: #217346; color: #fff; font-size: 11px; }
.status span:first-child { margin-right: auto; }
.status button { width: 38px; height: 22px; }
.status .on { background: #0f6331; }
.status .step { width: 8px; }
.status button + .step { margin-left: 3px; }
.status input { appearance: none; width: 101px; height: 12px; margin: 0 4px; background: linear-gradient(#fff, #fff) 0 6px / 100% 1px no-repeat, linear-gradient(#fff, #fff) 51px 4px / 1px 5px no-repeat; }
.status input::-webkit-slider-thumb { appearance: none; width: 4px; height: 11px; background: #fff; }
.zoom { margin-left: 16px; }

.taskbar { flex: none; display: flex; height: 40px; background: linear-gradient(90deg, #ebe6ab 0, #eadfc8 20%, #ecded5 30%, #ecdfd8 43%, #e5dfc0 51%, #dde5a9 60%, #e2e2ae 67%, #eee8a0 74%, #ebe7aa 100%); color: #222; }
.start { width: 48px; }
.search { display: flex; align-items: center; width: 287px; background: #fff; border: 1px solid #c8c8c8; padding-left: 12px; font-size: 14px; }
.search input { flex: 1; min-width: 0; padding-left: 10px; outline: 0; font-family: Roboto, sans-serif; }
.search input::placeholder { color: #333; opacity: 1; }
.apps { display: flex; margin-left: 2px; }
.apps button { width: 49px; height: 40px; }
.apps button.on { background: #f3f4e2; border-bottom: 2px solid #0078d4; }
.tray { display: flex; align-items: center; margin-left: auto; padding-right: 16px; gap: 9px; }
.rate { font-size: 13px; gap: 9px; }
.up2 { color: #218521; }
.chev { margin-left: 20px; }
.two { font-size: 12px; line-height: 17px; text-align: center; font-family: Roboto, sans-serif; }
.bell { margin-left: 4px; }
```
